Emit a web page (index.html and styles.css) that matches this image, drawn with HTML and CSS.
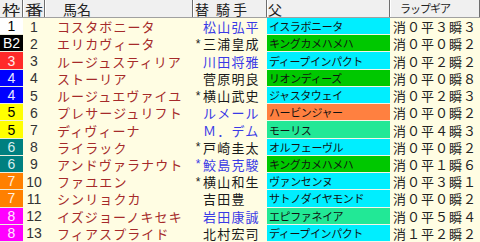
FILE: index.html
```html
<!DOCTYPE html>
<html lang="ja">
<head>
<meta charset="utf-8">
<title>出馬表</title>
<link rel="stylesheet" href="styles.css">
</head>
<body>
<div class="table">
  <div class="row head">
    <div class="c waku-h"><span class="wide">枠</span></div>
    <div class="c num-h"><span class="wide">番</span></div>
    <div class="c name-h">馬名</div>
    <div class="c jockey-h"><span>替</span><span class="kishu">騎手</span></div>
    <div class="c sire-h">父</div>
    <div class="c lap-h">ラップギア</div>
  </div>

  <div class="row">
    <div class="c waku w1">1</div><div class="c num">1</div>
    <div class="c name">コスタボニータ</div>
    <div class="c jockey"><span class="mark"></span><span class="blue">松山弘平</span></div>
    <div class="c sire cyan">イスラボニータ</div>
    <div class="c lap">消０平３瞬３</div>
  </div>
  <div class="row">
    <div class="c waku w2">B2</div><div class="c num">2</div>
    <div class="c name">エリカヴィータ</div>
    <div class="c jockey"><span class="mark">*</span><span>三浦皇成</span></div>
    <div class="c sire green">キングカメハメハ</div>
    <div class="c lap">消０平０瞬２</div>
  </div>
  <div class="row">
    <div class="c waku w3">3</div><div class="c num">3</div>
    <div class="c name">ルージュスティリア</div>
    <div class="c jockey"><span class="mark"></span><span class="blue">川田将雅</span></div>
    <div class="c sire cyan">ディープインパクト</div>
    <div class="c lap">消０平２瞬２</div>
  </div>
  <div class="row">
    <div class="c waku w4">4</div><div class="c num">4</div>
    <div class="c name">ストーリア</div>
    <div class="c jockey"><span class="mark"></span><span>菅原明良</span></div>
    <div class="c sire green">リオンディーズ</div>
    <div class="c lap">消０平０瞬８</div>
  </div>
  <div class="row">
    <div class="c waku w4">4</div><div class="c num">5</div>
    <div class="c name">ルージュエヴァイユ</div>
    <div class="c jockey"><span class="mark">*</span><span>横山武史</span></div>
    <div class="c sire cyan">ジャスタウェイ</div>
    <div class="c lap">消０平２瞬３</div>
  </div>
  <div class="row">
    <div class="c waku w5">5</div><div class="c num">6</div>
    <div class="c name">プレサージュリフト</div>
    <div class="c jockey"><span class="mark"></span><span class="blue">ルメール</span></div>
    <div class="c sire orange">ハービンジャー</div>
    <div class="c lap">消０平０瞬２</div>
  </div>
  <div class="row">
    <div class="c waku w5">5</div><div class="c num">7</div>
    <div class="c name">ディヴィーナ</div>
    <div class="c jockey"><span class="mark"></span><span class="blue">Ｍ．デム</span></div>
    <div class="c sire mint">モーリス</div>
    <div class="c lap">消０平４瞬３</div>
  </div>
  <div class="row">
    <div class="c waku w6">6</div><div class="c num">8</div>
    <div class="c name">ライラック</div>
    <div class="c jockey"><span class="mark">*</span><span>戸崎圭太</span></div>
    <div class="c sire cyan">オルフェーヴル</div>
    <div class="c lap">消０平０瞬２</div>
  </div>
  <div class="row">
    <div class="c waku w6">6</div><div class="c num">9</div>
    <div class="c name">アンドヴァラナウト</div>
    <div class="c jockey blue"><span class="mark">*</span><span>鮫島克駿</span></div>
    <div class="c sire green">キングカメハメハ</div>
    <div class="c lap">消０平１瞬６</div>
  </div>
  <div class="row">
    <div class="c waku w7">7</div><div class="c num">10</div>
    <div class="c name">ファユエン</div>
    <div class="c jockey"><span class="mark">*</span><span>横山和生</span></div>
    <div class="c sire cyan">ヴァンセンヌ</div>
    <div class="c lap">消０平３瞬１</div>
  </div>
  <div class="row">
    <div class="c waku w7">7</div><div class="c num">11</div>
    <div class="c name">シンリョクカ</div>
    <div class="c jockey"><span class="mark"></span><span>吉田豊</span></div>
    <div class="c sire cyan">サトノダイヤモンド</div>
    <div class="c lap">消０平０瞬２</div>
  </div>
  <div class="row">
    <div class="c waku w8">8</div><div class="c num">12</div>
    <div class="c name">イズジョーノキセキ</div>
    <div class="c jockey"><span class="mark"></span><span class="blue">岩田康誠</span></div>
    <div class="c sire mint">エピファネイア</div>
    <div class="c lap">消０平５瞬４</div>
  </div>
  <div class="row">
    <div class="c waku w8">8</div><div class="c num">13</div>
    <div class="c name">フィアスプライド</div>
    <div class="c jockey"><span class="mark"></span><span>北村宏司</span></div>
    <div class="c sire cyan">ディープインパクト</div>
    <div class="c lap">消１平２瞬２</div>
  </div>
</div>
</body>
</html>
```

FILE: styles.css
```css
html, body {
  margin: 0;
  padding: 0;
}
body {
  background: #fffde3;
  font-family: "Noto Sans CJK JP", "Liberation Sans", sans-serif;
  color: #222;
}
.table {
  display: flex;
  flex-direction: column;
  width: 480px;
  height: 242px;
  overflow: hidden;
}
.row {
  display: grid;
  grid-template-columns: 23px 22px 148px 74px 123px 90px;
  flex: 1 1 0;
  min-height: 0;
}
.c {
  display: flex;
  align-items: center;
  white-space: nowrap;
  overflow: hidden;
  box-sizing: border-box;
  min-width: 0;
}

/* header */
.head {
  flex: 0 0 18px;
  background: #f0f0f0;
  border-bottom: 1px solid #a0a0a0;
  box-sizing: border-box;
  font-size: 14px;
  color: #222;
}
.head .c {
  border-right: 1px solid #6e6e6e;
  line-height: 1;
  overflow: visible;
}
.head .c + .c {
  box-shadow: inset 1px 0 #ffffff;
}
.wide {
  display: inline-block;
  transform: scaleX(1.3);
}
.waku-h, .num-h {
  justify-content: center;
}
.name-h {
  padding-left: 18px;
}
.jockey-h {
  padding-left: 2px;
}
.kishu {
  margin-left: 7px;
  letter-spacing: 3px;
}
.sire-h {
  padding-left: 1px;
}
.lap-h {
  padding-left: 10px;
  font-size: 11px;
  letter-spacing: -1px;
}

/* body cells */
.waku {
  justify-content: center;
  font-family: "Liberation Sans", sans-serif;
  font-size: 14px;
  border-bottom: 1px solid #eeeedd;
}
.w1 { background: #ffffff; color: #000; }
.w2 { background: #000000; color: #fff; }
.w3 { background: #ff2a2a; color: #ffe8e8; }
.w4 { background: #0000ff; color: #e8e8ff; }
.w5 { background: #ffff00; color: #000; }
.w6 { background: #008080; color: #d8eeee; }
.w7 { background: #ff8000; color: #fff0e0; }
.w8 { background: #ff00ff; color: #ffe8ff; }

.num {
  justify-content: center;
  font-family: "Liberation Sans", sans-serif;
  font-size: 14px;
  color: #333;
}
.name {
  padding-left: 12px;
  font-size: 13px;
  letter-spacing: 1.1px;
  color: #a52a2a;
}
.jockey {
  font-size: 13px;
  letter-spacing: 1.2px;
  color: #1a1a1a;
}
.mark {
  display: inline-block;
  width: 10px;
  text-align: center;
  letter-spacing: 0;
  font-family: "Liberation Sans", sans-serif;
  font-size: 12px;
}
.blue {
  color: #3a3ae6;
}
.sire {
  padding-left: 2px;
  font-size: 11px;
  letter-spacing: -0.4px;
  color: #111;
  border-bottom: 1px solid #f4f4e6;
}
.cyan { background: #00eeff; }
.green { background: #00c800; }
.orange { background: #ff8040; }
.mint { background: #22e896; }
.lap {
  padding-left: 3px;
  font-size: 13px;
  letter-spacing: 1px;
  color: #222;
}
```
